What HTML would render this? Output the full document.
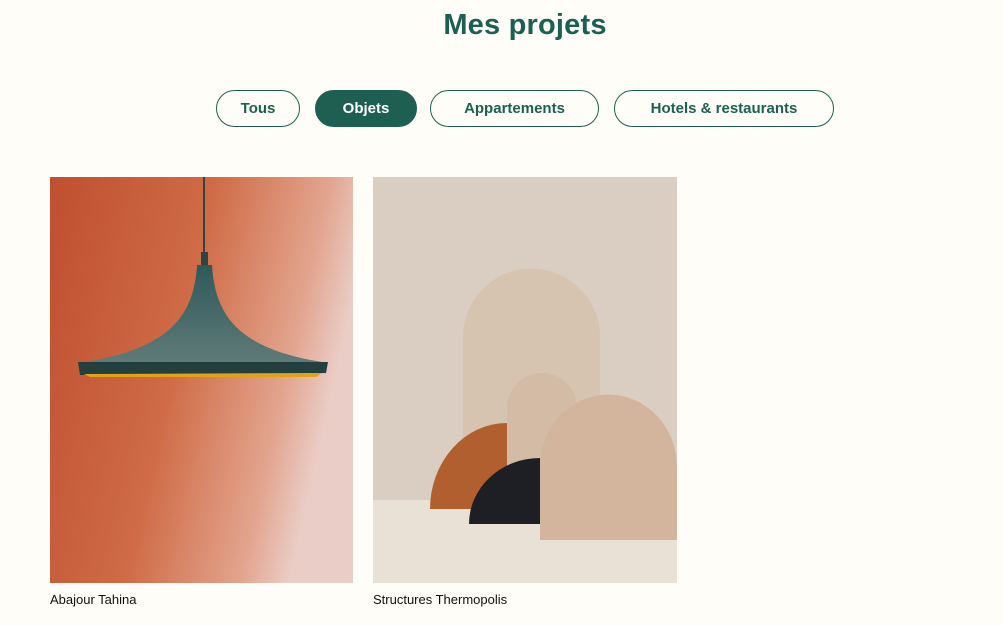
<!DOCTYPE html>
<html><head><meta charset="utf-8"><style>
html,body{margin:0;padding:0;background:#fffdf7;width:1003px;height:625px;overflow:hidden}
body{position:relative;font-family:"Liberation Sans",sans-serif}
h1{position:absolute;top:9px;left:0;width:1050px;text-align:center;margin:0;font-size:29px;font-weight:bold;color:#1d6052;letter-spacing:0.2px}
.b{position:absolute;top:90px;height:35px;border:1px solid #1d6052;border-radius:19px;color:#1d6052;font-weight:bold;font-size:15px;line-height:36px;text-align:center;box-sizing:content-box}
.b.on{background:#1d6052;color:#fff}
.cap{position:absolute;top:592px;font-size:13px;color:#111;font-family:"Liberation Sans",sans-serif}
svg{position:absolute}
</style></head><body>
<h1>Mes projets</h1>
<div class="b" style="left:216px;width:82px">Tous</div>
<div class="b on" style="left:315px;width:100px">Objets</div>
<div class="b" style="left:430px;width:167px">Appartements</div>
<div class="b" style="left:614px;width:218px">Hotels &amp; restaurants</div>

<svg style="left:50px;top:177px" width="303" height="406" viewBox="0 0 303 406">
<defs>
<linearGradient id="g1" x1="0" y1="0" x2="1" y2="0.3">
<stop offset="0" stop-color="#bf4f30"/><stop offset="0.5" stop-color="#cf6b46"/><stop offset="0.85" stop-color="#e2a48e"/><stop offset="1" stop-color="#eacdc6"/></linearGradient>
<linearGradient id="g2" x1="0" y1="0" x2="0" y2="1">
<stop offset="0" stop-color="#2e5a5a"/><stop offset="1" stop-color="#5f7a78"/></linearGradient>
</defs>
<rect width="303" height="406" fill="url(#g1)"/>
<line x1="154" y1="0" x2="154" y2="78" stroke="#2f4544" stroke-width="2"/>
<rect x="151" y="75" width="7" height="13" fill="#2f4544"/>
<path d="M147 88 L162 88 C165 140 190 172 272 185 L34 185 C118 172 144 140 147 88Z" fill="url(#g2)"/>
<path d="M28 185 L278 185 L276 196 L30 198Z" fill="#233f3f"/>
<path d="M34 197 L272 196 L266 200 L40 200Z" fill="#e3a114"/>
</svg>

<svg style="left:373px;top:177px" width="304" height="406" viewBox="0 0 304 406">
<rect width="304" height="406" fill="#dacec2"/>
<rect y="323" width="304" height="83" fill="#e9e1d6"/>
<path d="M90 323 L90 160 A68 68 0 0 1 227 160 L227 323Z" fill="#d6c3b0"/>
<path d="M134 330 L134 231 A35 35 0 0 1 204 231 L204 330Z" fill="#d3bba5"/>
<path d="M57 332 A77 86 0 0 1 134 246 L134 332Z" fill="#b25f2f"/>
<path d="M96 347 A71 66 0 0 1 167 281 L167 347Z" fill="#1e1f24"/>
<path d="M167 363 L167 290 A68 72 0 0 1 304 290 L304 363Z" fill="#d2b59c"/>
</svg>

<div class="cap" style="left:50px">Abajour Tahina</div>
<div class="cap" style="left:373px">Structures Thermopolis</div>
</body></html>
